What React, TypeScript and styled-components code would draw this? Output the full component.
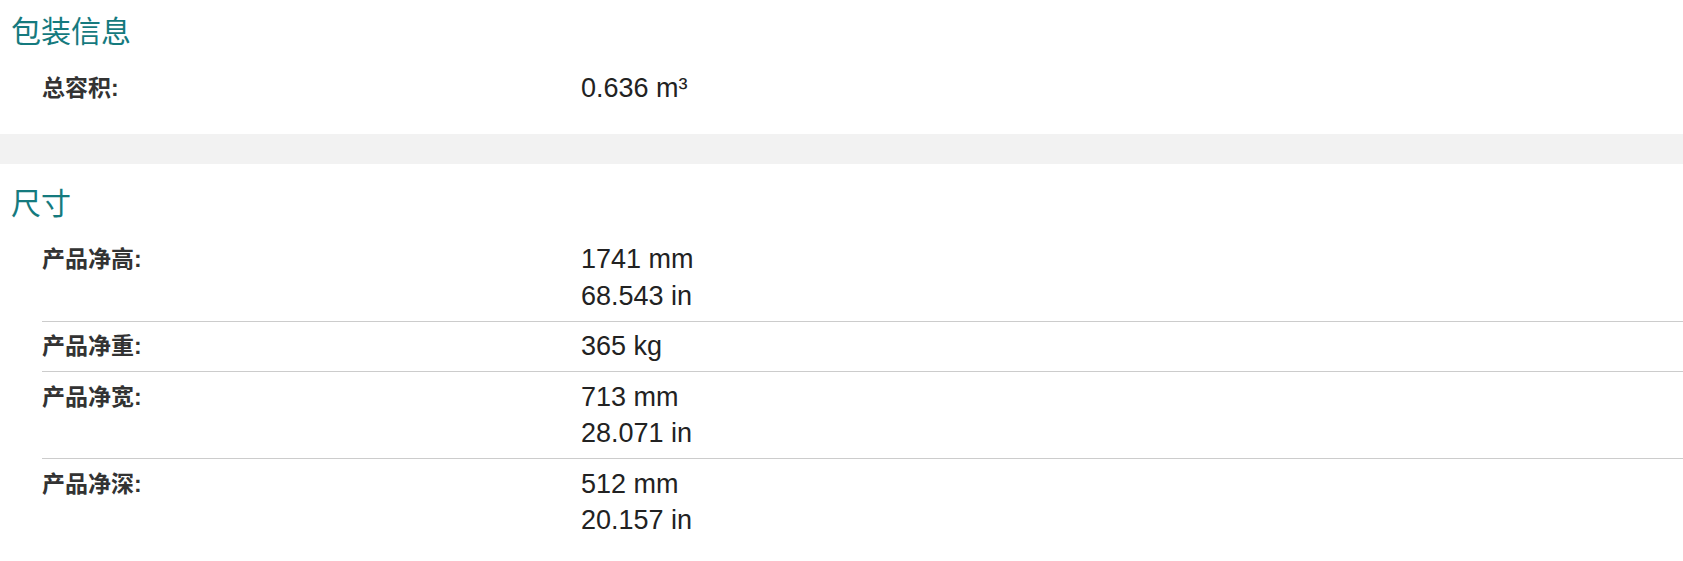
import styled, { createGlobalStyle } from "styled-components";

type TSpecRow = {
  label: string;
  values: string[];
};

type TSpecSection = {
  title: string;
  rows: TSpecRow[];
};

const sections: TSpecSection[] = [
  {
    title: "包装信息",
    rows: [{ label: "总容积:", values: ["0.636 m³"] }],
  },
  {
    title: "尺寸",
    rows: [
      { label: "产品净高:", values: ["1741 mm", "68.543 in"] },
      { label: "产品净重:", values: ["365 kg"] },
      { label: "产品净宽:", values: ["713 mm", "28.071 in"] },
      { label: "产品净深:", values: ["512 mm", "20.157 in"] },
    ],
  },
];

const GlobalStyle = createGlobalStyle`
  html, body {
    margin: 0;
    padding: 0;
    background: #fff;
  }
  body {
    font-family: "Liberation Sans", Arial, "Noto Sans CJK SC", sans-serif;
    color: #222;
  }
`;

const App = () => {
  return (
    <>
      <GlobalStyle />
      <Page>
        {sections.map((section, i) => (
          <div key={section.title}>
            {i > 0 && <Divider />}
            <Section first={i === 0}>
              <Heading>{section.title}</Heading>
              <SpecTable>
                {section.rows.map((row) => (
                  <Row key={row.label}>
                    <Label>{row.label}</Label>
                    <Value>
                      {row.values.map((v) => (
                        <div key={v}>{v}</div>
                      ))}
                    </Value>
                  </Row>
                ))}
              </SpecTable>
            </Section>
          </div>
        ))}
      </Page>
    </>
  );
};

const Page = styled.div`
  width: 100%;
`;

const Divider = styled.div`
  height: 30px;
  background-color: #f2f2f2;
`;

const Section = styled.section<{ first: boolean }>`
  padding-top: ${(props) => (props.first ? "11px" : "19px")};
  padding-bottom: ${(props) => (props.first ? "21px" : "0")};
`;

const Heading = styled.h2`
  margin: 0 0 16px 0;
  padding-left: 11px;
  font-family: "Noto Sans CJK SC", "Liberation Sans", sans-serif;
  font-weight: 400;
  font-size: 30px;
  line-height: 36px;
  color: #157a7e;
`;

const SpecTable = styled.div`
  margin-left: 42px;
`;

const Row = styled.div`
  display: grid;
  grid-template-columns: 539px 1fr;
  padding: 6.5px 0;

  & + & {
    border-top: 1px solid #cccccc;
  }
`;

const Label = styled.div`
  font-family: "Liberation Sans", "Noto Sans CJK SC", sans-serif;
  font-weight: 700;
  font-size: 23px;
  line-height: 36.5px;
  color: #333;
`;

const Value = styled.div`
  font-family: "Liberation Sans", Arial, sans-serif;
  font-size: 27px;
  line-height: 36.5px;
  color: #222;
`;

export default App;
